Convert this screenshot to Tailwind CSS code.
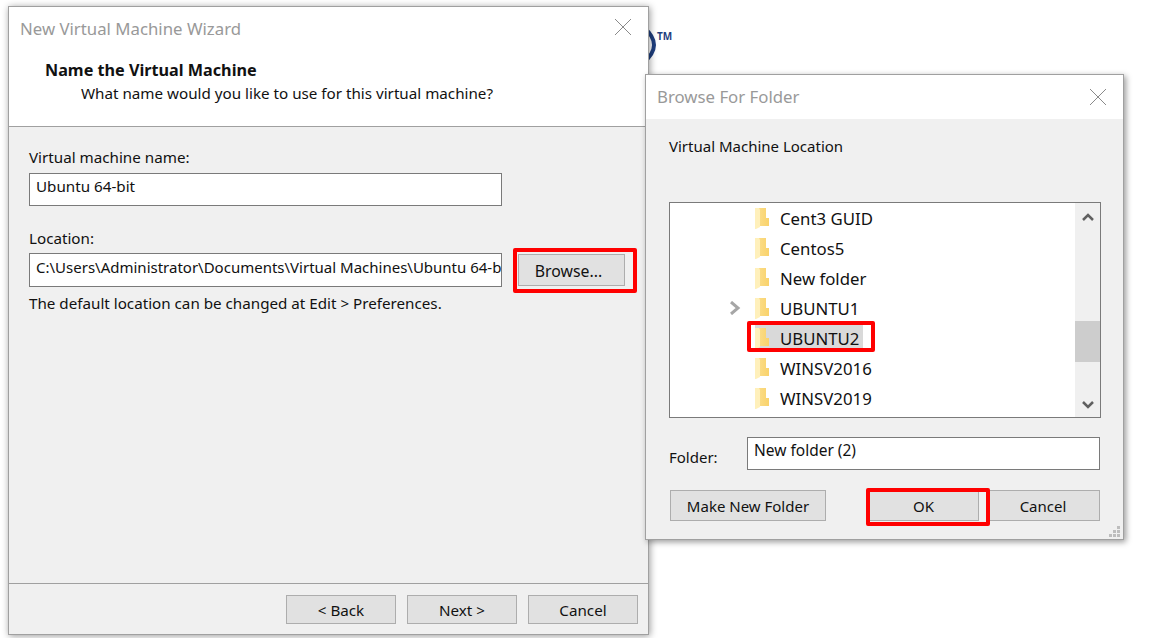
<!DOCTYPE html>
<html lang="en">
<head>
    <meta charset="UTF-8">
    <title>New Virtual Machine Wizard</title>
    <script src="https://cdn.jsdelivr.net/npm/@tailwindcss/browser@4"></script>
</head>
<body class="bg-white">
<div class="relative w-[1158px] h-[638px] overflow-hidden bg-white font-['Noto_Sans',sans-serif] text-[15px] leading-[20px] text-[#111]">

    <!-- logo left over behind the dialogs -->
    <div class="absolute left-[640px] top-[26px] w-[40px] h-[40px]">
        <svg width="20" height="40" viewBox="0 0 20 40" class="absolute left-[2px] top-0"><path d="M0 0 Q24 19 0 38" fill="none" stroke="#1f3f7f" stroke-width="4"/></svg>
        <span class="absolute left-[17px] top-[1px] text-[10px] leading-[18px] font-bold text-[#1f3f7f]">TM</span>
    </div>

    <!-- wizard -->
    <div class="absolute left-[8px] top-[6px] w-[641px] h-[629px] flex flex-col border border-[#a0a0a0] bg-[#f0f0f0] text-[15.2px] shadow-[1px_1px_7px_rgba(0,0,0,0.4)]">
        <div class="h-[120px] bg-white border-b border-[#a0a0a0] shrink-0">
            <div class="flex items-center justify-between h-[40px] pl-[11px] pr-[16px]">
                <span class="text-[16.8px] text-[#999] pt-[3px]">New Virtual Machine Wizard</span>
                <svg width="18" height="18" viewBox="0 0 18 18"><path d="M1 1 L17 17 M17 1 L1 17" stroke="#8a8a8a" stroke-width="1" fill="none"/></svg>
            </div>
            <div class="pl-[36px] pt-[13px] text-[16.2px] font-bold">Name the Virtual Machine</div>
            <div class="pl-[72px] pt-[3px]">What name would you like to use for this virtual machine?</div>
        </div>
        <div class="flex-1 px-[20px] pt-[20px]">
            <div>Virtual machine name:</div>
            <div class="mt-[6px] w-[473px] h-[33px] border border-[#7a7a7a] bg-white pl-[6px] pt-[2px]">Ubuntu 64-bit</div>
            <div class="mt-[22px]">Location:</div>
            <div class="mt-[5px] flex items-start">
                <div class="w-[473px] h-[34px] border border-[#7a7a7a] bg-white pl-[6px] pt-[3px] text-[15px] overflow-hidden whitespace-nowrap">C:\Users\Administrator\Documents\Virtual Machines\Ubuntu 64-bit</div>
                <button class="ml-[16px] mt-[1px] w-[107px] h-[32px] border border-[#adadad] bg-[#e1e1e1] text-[15.8px] pr-[6px] pt-[1px]">Browse...</button>
            </div>
            <div class="mt-[6px]">The default location can be changed at Edit &gt; Preferences.</div>
        </div>
        <div class="h-[51px] shrink-0 border-t border-[#a0a0a0] flex justify-end gap-[11px] pt-[11px] pr-[10px]">
            <button class="w-[110px] h-[29px] border border-[#adadad] bg-[#e1e1e1]">&lt; Back</button>
            <button class="w-[110px] h-[29px] border border-[#adadad] bg-[#e1e1e1]">Next &gt;</button>
            <button class="w-[110px] h-[29px] border border-[#adadad] bg-[#e1e1e1]">Cancel</button>
        </div>
    </div>

    <!-- browse for folder -->
    <div class="absolute left-[645px] top-[74px] w-[479px] h-[466px] flex flex-col border border-[#a0a0a0] bg-[#f0f0f0] shadow-[2px_2px_6px_rgba(0,0,0,0.4)]">
        <div class="h-[44px] bg-white shrink-0 flex items-center justify-between pl-[11px] pr-[16px]">
            <span class="text-[16.8px] text-[#999]">Browse For Folder</span>
            <svg width="18" height="18" viewBox="0 0 18 18"><path d="M1 1 L17 17 M17 1 L1 17" stroke="#8a8a8a" stroke-width="1" fill="none"/></svg>
        </div>
        <div class="pl-[23px] pt-[17px]">Virtual Machine Location</div>
        <div class="ml-[23px] mt-[46px] w-[432px] h-[216px] border border-[#7a7a7a] bg-white flex">
            <div class="flex-1 text-[16.8px]">
                <div class="h-[30px] flex items-center pl-[85px]"><svg width="15" height="21" viewBox="0 0 15 21"><use href="#folder"/></svg><span class="ml-[10px] pt-[2px]">Cent3 GUID</span></div>
                <div class="h-[30px] flex items-center pl-[85px]"><svg width="15" height="21" viewBox="0 0 15 21"><use href="#folder"/></svg><span class="ml-[10px] pt-[2px]">Centos5</span></div>
                <div class="h-[30px] flex items-center pl-[85px]"><svg width="15" height="21" viewBox="0 0 15 21"><use href="#folder"/></svg><span class="ml-[10px] pt-[2px]">New folder</span></div>
                <div class="h-[30px] flex items-center pl-[59px]">
                    <svg width="12" height="14" viewBox="0 0 12 14" class="mr-[14px]"><path d="M2 1 L9 7 L2 13" fill="none" stroke="#a6a6a6" stroke-width="3"/></svg>
                    <svg width="15" height="21" viewBox="0 0 15 21"><use href="#folder"/></svg><span class="ml-[10px] pt-[2px]">UBUNTU1</span>
                </div>
                <div class="h-[30px] flex items-center pl-[85px]">
                    <div class="flex items-center h-[26px] bg-[#d9d9d9] pr-[4px]"><svg width="15" height="21" viewBox="0 0 15 21"><use href="#folder"/></svg><span class="ml-[10px] pt-[2px]">UBUNTU2</span></div>
                </div>
                <div class="h-[30px] flex items-center pl-[85px]"><svg width="15" height="21" viewBox="0 0 15 21"><use href="#folder"/></svg><span class="ml-[10px] pt-[2px]">WINSV2016</span></div>
                <div class="h-[30px] flex items-center pl-[85px]"><svg width="15" height="21" viewBox="0 0 15 21"><use href="#folder"/></svg><span class="ml-[10px] pt-[2px]">WINSV2019</span></div>
            </div>
            <div class="w-[25px] bg-[#f0f0f0] flex flex-col items-center justify-between pt-[9px] pb-[7px] relative">
                <svg width="14" height="10" viewBox="0 0 14 10"><path d="M2 8 L7 3 L12 8" fill="none" stroke="#606060" stroke-width="2.5"/></svg>
                <div class="absolute left-0 top-[118px] w-[25px] h-[41px] bg-[#cdcdcd]"></div>
                <svg width="14" height="10" viewBox="0 0 14 10"><path d="M2 2 L7 7 L12 2" fill="none" stroke="#606060" stroke-width="2.5"/></svg>
            </div>
        </div>
        <div class="flex pl-[23px] mt-[19px]">
            <span class="w-[78px] pt-[10px]">Folder:</span>
            <div class="w-[353px] h-[33px] border border-[#7a7a7a] bg-white pl-[6px] pt-[2px] text-[15.5px]">New folder (2)</div>
        </div>
        <div class="flex pl-[24px] mt-[20px]">
            <button class="w-[156px] h-[31px] border border-[#adadad] bg-[#e1e1e1]">Make New Folder</button>
            <button class="ml-[42px] w-[111px] h-[31px] border border-[#adadad] bg-[#e1e1e1]">OK</button>
            <button class="ml-[7px] w-[114px] h-[31px] border border-[#adadad] bg-[#e1e1e1]">Cancel</button>
        </div>
        <!-- resize grip -->
        <div class="absolute right-[3px] bottom-[2px] grid grid-cols-3 gap-[1px]">
            <span></span><span></span><span class="w-[3px] h-[3px] bg-[#bdbdbd]"></span>
            <span></span><span class="w-[3px] h-[3px] bg-[#bdbdbd]"></span><span class="w-[3px] h-[3px] bg-[#bdbdbd]"></span>
            <span class="w-[3px] h-[3px] bg-[#bdbdbd]"></span><span class="w-[3px] h-[3px] bg-[#bdbdbd]"></span><span class="w-[3px] h-[3px] bg-[#bdbdbd]"></span>
        </div>
    </div>

    <!-- red annotations -->
    <div class="absolute left-[513px] top-[248px] w-[124px] h-[45px] border-4 border-[#ff0000] rounded-[2px]"></div>
    <div class="absolute left-[747px] top-[321px] w-[128px] h-[31px] border-4 border-[#ff0000] rounded-[2px]"></div>
    <div class="absolute left-[866px] top-[488px] w-[124px] h-[38px] border-4 border-[#ff0000] rounded-[2px]"></div>

    <svg width="0" height="0" class="absolute">
        <defs>
            <linearGradient id="fg" x1="0" y1="0" x2="1" y2="0"><stop offset="0" stop-color="#fbdc86"/><stop offset="1" stop-color="#f9d26b"/></linearGradient>
            <g id="folder">
                <path d="M4 0 H11 V10 H14 V18 H4 Z" fill="url(#fg)"/>
                <path d="M0 0 H4 L5 2 V19 L1 21 H0 Z" fill="#fff0bb"/>
            </g>
        </defs>
    </svg>
</div>
</body>
</html>
